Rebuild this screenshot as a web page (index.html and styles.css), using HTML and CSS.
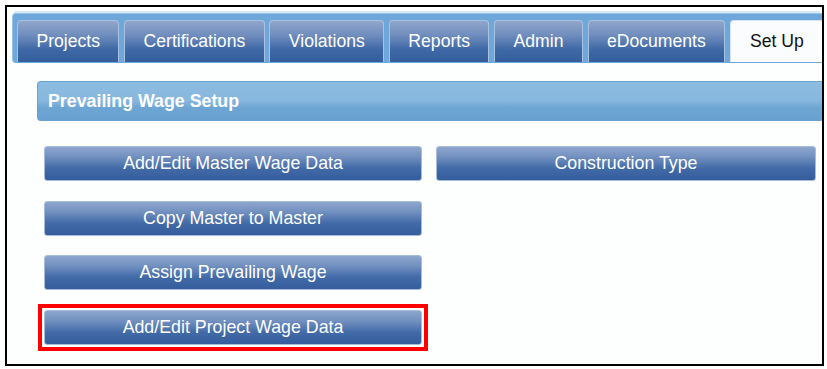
FILE: index.html
```html
<!DOCTYPE html>
<html lang="en">

<head>
    <meta charset="UTF-8">
    <meta name="viewport" content="width=device-width, initial-scale=1.0">
    <title>Prevailing Wage Setup</title>
    <link rel="stylesheet" href="styles.css">
</head>

<body>
    <div class="frame">
        <ul class="tabs">
            <li class="tab">Projects</li>
            <li class="tab">Certifications</li>
            <li class="tab">Violations</li>
            <li class="tab">Reports</li>
            <li class="tab">Admin</li>
            <li class="tab">eDocuments</li>
            <li class="tab active">Set Up</li>
        </ul>

        <div class="panel">
            <div class="panelHead">Prevailing Wage Setup</div>
            <div class="btnGrid">
                <button class="wageBtn">Add/Edit Master Wage Data</button>
                <button class="wageBtn">Construction Type</button>
                <button class="wageBtn">Copy Master to Master</button>
                <span></span>
                <button class="wageBtn">Assign Prevailing Wage</button>
                <span></span>
                <button class="wageBtn marked">Add/Edit Project Wage Data</button>
            </div>
        </div>
    </div>
</body>

</html>
```

FILE: styles.css
```css
body {
    margin: 0;
    background: #ffffff;
    font-family: "Liberation Sans", Arial, sans-serif;
}

.frame {
    margin: 5px 0 0 5px;
    width: 815px;
    height: 357px;
    border: 2px solid #000000;
    background: #fdfefe;
    overflow: hidden;
}

.tabs {
    display: flex;
    gap: 4.8px;
    list-style: none;
    margin: 6px 0 0 5px;
    padding: 6px 0 0 4px;
    height: 43px;
    background: #6ea8da;
    border: 1px solid #9cc4e6;
    border-right: none;
    border-bottom: none;
    border-radius: 4px 0 0 4px;
    box-shadow: 0 -4px 0 -2px #d8e7f4;
}

.tab {
    display: flex;
    align-items: center;
    flex-shrink: 0;
    white-space: nowrap;
    padding: 0 18.4px;
    height: 42px;
    box-sizing: border-box;
    font-size: 17.6px;
    color: #ffffff;
    background: linear-gradient(to bottom, #91a6cb 0%, #6f8dbd 35%, #3e68a6 70%, #355d9c 100%);
    border: 1px solid #a9c2e2;
    border-bottom: none;
    border-radius: 4px 4px 0 0;
}

.tab.active {
    color: #111111;
    background: #fbfcfd;
    border-color: #d6e4f1;
    padding: 0 19px;
}

.panel {
    padding: 18px 0 0 30px;
}

.panelHead {
    display: flex;
    align-items: center;
    height: 40px;
    box-sizing: border-box;
    padding-left: 10px;
    font-size: 17.8px;
    font-weight: bold;
    color: #ffffff;
    background: linear-gradient(to bottom, #8dbce1 0%, #86b7de 50%, #7aaed9 58%, #6da5d3 68%, #68a1d0 100%);
    border: 1px solid #6aa2d0;
    border-right: none;
    border-radius: 4px 0 0 4px;
}

.btnGrid {
    display: grid;
    grid-template-columns: 378px 380px;
    grid-auto-rows: 35px;
    column-gap: 14px;
    row-gap: 19.7px;
    margin: 25px 0 0 7px;
}

.wageBtn {
    margin: 0;
    padding: 0;
    font-family: "Liberation Sans", Arial, sans-serif;
    font-size: 17.8px;
    color: #ffffff;
    background: linear-gradient(to bottom, #8da6cc 0%, #7290c0 30%, #416aa7 65%, #355d9c 100%);
    border: 1px solid #a6bddd;
    border-radius: 3px;
}

/* red annotation box round the highlighted button */
.marked {
    position: relative;
}

.marked::after {
    content: "";
    position: absolute;
    top: -7px;
    left: -7px;
    right: -7px;
    bottom: -7px;
    border: 4px solid #ff0000;
}
```
